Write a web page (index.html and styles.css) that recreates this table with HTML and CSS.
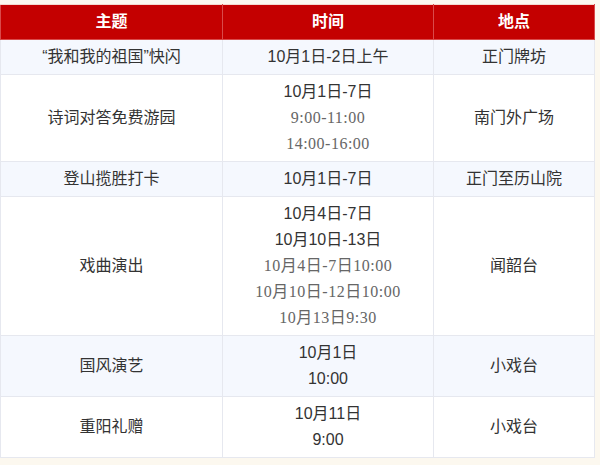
FILE: index.html
```html
<!DOCTYPE html>
<html lang="zh-CN">
<head>
<meta charset="utf-8">
<title>活动安排</title>
<link rel="stylesheet" href="styles.css">
</head>
<body>
<table class="schedule">
  <colgroup>
    <col class="c-theme">
    <col class="c-time">
    <col class="c-place">
  </colgroup>
  <thead>
    <tr><th>主题</th><th>时间</th><th>地点</th></tr>
  </thead>
  <tbody>
    <tr class="alt">
      <td>“我和我的祖国”快闪</td>
      <td>10月1日-2日上午</td>
      <td>正门牌坊</td>
    </tr>
    <tr>
      <td>诗词对答免费游园</td>
      <td><div>10月1日-7日</div><div class="serif">9:00-11:00</div><div class="serif">14:00-16:00</div></td>
      <td>南门外广场</td>
    </tr>
    <tr class="alt">
      <td>登山揽胜打卡</td>
      <td>10月1日-7日</td>
      <td>正门至历山院</td>
    </tr>
    <tr>
      <td>戏曲演出</td>
      <td><div>10月4日-7日</div><div>10月10日-13日</div><div class="serif">10月4日-7日10:00</div><div class="serif">10月10日-12日10:00</div><div class="serif">10月13日9:30</div></td>
      <td>闻韶台</td>
    </tr>
    <tr class="alt">
      <td>国风演艺</td>
      <td><div>10月1日</div><div>10:00</div></td>
      <td>小戏台</td>
    </tr>
    <tr>
      <td>重阳礼赠</td>
      <td><div>10月11日</div><div>9:00</div></td>
      <td>小戏台</td>
    </tr>
  </tbody>
</table>
</body>
</html>
```
FILE: styles.css
```css
html, body {
  margin: 0;
  padding: 0;
  background: #fcf8ef;
}
body {
  padding-top: 4px;
  font-family: "Liberation Sans", "Noto Sans CJK SC", sans-serif;
  color: #333;
}
.schedule {
  width: 594px;
  border-collapse: collapse;
  table-layout: fixed;
  font-size: 16px;
}
.c-theme { width: 222px; }
.c-time { width: 211px; }
.c-place { width: 161px; }
.schedule th {
  background: #c40000;
  color: #fff;
  font-weight: bold;
  height: 34px;
  padding: 0;
  line-height: 24px;
  border: 1px solid #d94a4a;
  border-top-color: #f3d9d0;
}
.schedule td {
  text-align: center;
  vertical-align: middle;
  padding: 4px 0;
  line-height: 26px;
  border: 1px solid #e6e8ef;
  background: #fff;
}
.schedule tr.alt td {
  background: #f5f8fe;
}
.schedule .serif {
  font-family: "Liberation Serif", "Noto Sans CJK SC", serif;
  color: #666;
  font-size: 16px;
  letter-spacing: 0.5px;
}
```
